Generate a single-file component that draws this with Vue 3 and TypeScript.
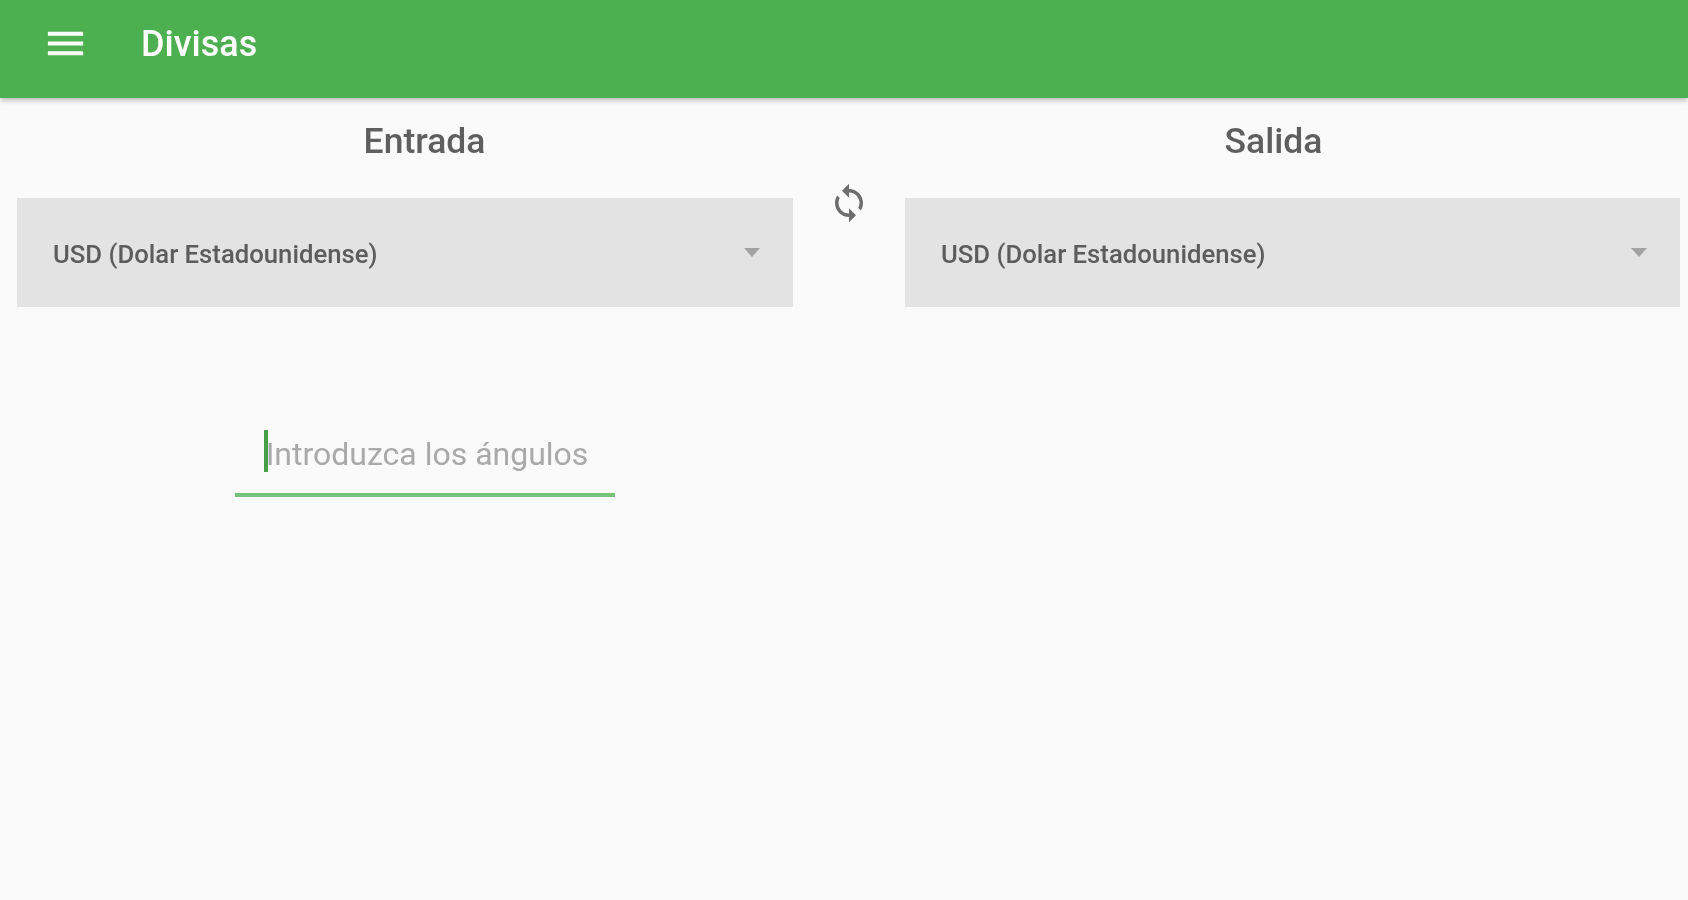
<template>
  <div class="page">
    <header class="toolbar">
      <svg class="menu-icon" viewBox="0 0 24 24" fill="currentColor" aria-hidden="true">
        <path d="M3 18h18v-2H3v2zm0-5h18v-2H3v2zm0-7v2h18V6H3z" />
      </svg>
      <h1 class="toolbar-title">Divisas</h1>
    </header>

    <div class="titles">
      <h2 class="col-title">Entrada</h2>
      <h2 class="col-title">Salida</h2>
    </div>

    <div class="selects">
      <div class="select">
        <span class="select-text">{{ currency }}</span>
        <span class="select-arrow"></span>
      </div>
      <button class="swap" type="button" aria-label="Intercambiar">
        <svg viewBox="0 0 24 24" fill="currentColor" aria-hidden="true">
          <path d="M12 4V1L8 5l4 4V6c3.31 0 6 2.69 6 6 0 1.01-.25 1.97-.7 2.8l1.46 1.46C19.54 15.03 20 13.57 20 12c0-4.42-3.58-8-8-8zm0 14c-3.31 0-6-2.69-6-6 0-1.01.25-1.97.7-2.8L5.24 7.74C4.46 8.97 4 10.43 4 12c0 4.42 3.58 8 8 8v3l4-4-4-4v3z" />
        </svg>
      </button>
      <div class="select">
        <span class="select-text">{{ currency }}</span>
        <span class="select-arrow"></span>
      </div>
    </div>

    <div class="amount">
      <div class="field">
        <input class="field-input" type="text" placeholder="Introduzca los ángulos" />
        <span class="caret"></span>
      </div>
    </div>
  </div>
</template>

<script setup lang="ts">
const currency = 'USD (Dolar Estadounidense)'
</script>

<style>
html,
body {
  background: #fafafa;
  overflow: hidden;
}
</style>

<style scoped>
.page {
  width: 1688px;
  height: 900px;
  overflow: hidden;
  background: #fafafa;
  font-family: Roboto, "Liberation Sans", sans-serif;
  filter: blur(0.7px);
}

.toolbar {
  display: flex;
  align-items: center;
  height: 98px;
  box-sizing: border-box;
  padding: 0 0 11px 42px;
  background: #4caf50;
  color: #fff;
  box-shadow: 0 2px 6px rgba(0, 0, 0, 0.28);
}

.menu-icon {
  width: 47px;
  height: 47px;
  flex: none;
}

.toolbar-title {
  margin: 0 0 0 52px;
  font-size: 36px;
  font-weight: 500;
}

.titles {
  display: grid;
  grid-template-columns: 849px 849px;
  padding-top: 22px;
}

.col-title {
  margin: 0;
  height: 42px;
  line-height: 43px;
  text-align: center;
  font-size: 35.5px;
  font-weight: 500;
  color: #5f5f5f;
}

.selects {
  display: grid;
  grid-template-columns: 776px 112px 775px;
  padding: 0 8px 0 17px;
  margin-top: 22px;
}

.select {
  display: flex;
  align-items: center;
  justify-content: space-between;
  height: 109px;
  margin-top: 14px;
  padding: 0 33px 0 36px;
  background: #e3e3e3;
}

.select-text {
  padding-top: 3px;
  font-size: 25.7px;
  font-weight: 500;
  color: #5c5c5c;
}

.select-arrow {
  width: 0;
  height: 0;
  border-left: 8px solid transparent;
  border-right: 8px solid transparent;
  border-top: 9px solid #a3a3a3;
}

.swap {
  align-self: start;
  justify-self: center;
  height: 42px;
  margin-top: -2px;
  padding: 0;
  border: 0;
  background: none;
  color: #6d6d6d;
}

.swap svg {
  display: block;
  width: 42px;
  height: 42px;
}

.amount {
  width: 849px;
  display: flex;
  justify-content: center;
  padding-top: 120px;
}

.field {
  position: relative;
  width: 380px;
}

.field-input {
  display: block;
  width: 100%;
  height: 70px;
  box-sizing: border-box;
  padding: 0 0 13px 5px;
  border: 0;
  border-bottom: 4px solid #75c278;
  outline: none;
  background: transparent;
  text-align: center;
  font: 400 32px Roboto, "Liberation Sans", sans-serif;
}

.field-input::placeholder {
  color: #a9a9a9;
  opacity: 1;
}

.caret {
  position: absolute;
  left: 29px;
  top: 3px;
  width: 4px;
  height: 42px;
  background: #43a047;
}
</style>
